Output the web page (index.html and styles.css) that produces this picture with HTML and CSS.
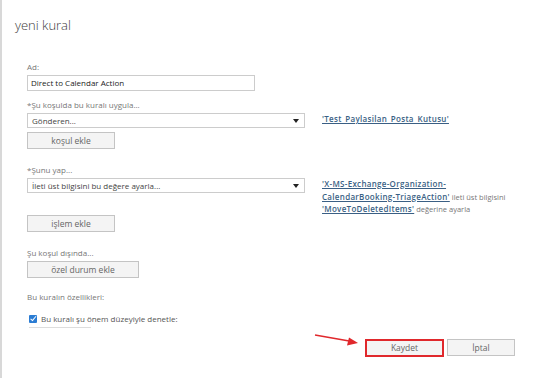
FILE: index.html
```html
<!DOCTYPE html>
<html lang="tr">
<head>
    <meta charset="UTF-8">
    <title>yeni kural</title>
    <link rel="stylesheet" href="styles.css">
</head>
<body>
    <div class="dialog">
        <h1 class="title">yeni kural</h1>

        <div class="form">
            <!-- Ad -->
            <div class="label first">Ad:</div>
            <div class="textbox">Direct to Calendar Action</div>

            <!-- kosul -->
            <div class="label gap-s">*Şu koşulda bu kuralı uygula...</div>
            <div class="row">
                <div class="select">Gönderen...<span class="caret"></span></div>
                <div class="desc"><a href="#">'Test_Paylasilan_Posta_Kutusu'</a></div>
            </div>
            <button class="btn btn-add">koşul ekle</button>

            <!-- eylem -->
            <div class="label gap-l">*Şunu yap...</div>
            <div class="row">
                <div class="select">İleti üst bilgisini bu değere ayarla...<span class="caret"></span></div>
                <div class="desc">
                    <a href="#">'X-MS-Exchange-Organization-<br>CalendarBooking-TriageAction'</a> ileti üst bilgisini
                    <a href="#">'MoveToDeletedItems'</a> değerine ayarla
                </div>
            </div>
            <button class="btn btn-add btn-action">işlem ekle</button>

            <!-- istisna -->
            <div class="label gap-l">Şu koşul dışında...</div>
            <button class="btn btn-except">özel durum ekle</button>

            <div class="label gap-m">Bu kuralın özellikleri:</div>
            <div class="check-row">
                <span class="checkbox"></span>
                <span>Bu kuralı şu önem düzeyiyle denetle:</span>
            </div>
            <div class="cut-field"></div>
        </div>

        <div class="footer">
            <button class="btn btn-save">Kaydet</button>
            <button class="btn btn-cancel">İptal</button>
        </div>

        <!-- annotation arrow -->
        <svg class="arrow" width="50" height="14" viewBox="0 0 50 14">
            <line x1="1" y1="2" x2="38" y2="8.5" stroke="#e0282c" stroke-width="1.5"/>
            <polygon points="44,10 33,12.5 35,4.5" fill="#e0282c"/>
        </svg>
    </div>
</body>
</html>
```

FILE: styles.css
```css
body {
    margin: 0;
    background: #fff;
    font-family: 'Open Sans', 'Noto Sans', sans-serif;
    color: #555;
}

.dialog {
    position: relative;
    width: 536px;
    height: 378px;
    box-sizing: border-box;
    border-left: 2px solid #d8d8d8;
    padding: 17px 0 0 13px;
}

.title {
    margin: 0;
    font-size: 13px;
    font-weight: 300;
    line-height: 16px;
    color: #3a3a3a;
}

.form {
    padding-left: 12px;
}

.label {
    font-size: 8px;
    line-height: 12px;
    color: #777;
    margin-bottom: 2px;
}

.first { margin-top: 28px; }
.gap-s { margin-top: 8px; }
.gap-l { margin-top: 15px; }
.gap-m { margin-top: 13px; }

.textbox {
    width: 223px;
    height: 14px;
    border: 1px solid #ccc;
    padding-left: 3px;
    font-size: 8px;
    line-height: 14px;
    color: #222;
}

.row {
    display: flex;
    align-items: flex-start;
}

.select {
    position: relative;
    width: 272px;
    height: 13px;
    border: 1px solid #ccc;
    padding-left: 4px;
    font-size: 8px;
    line-height: 13px;
    color: #444;
}

.caret {
    position: absolute;
    right: 5px;
    top: 5px;
    border-left: 3px solid transparent;
    border-right: 3px solid transparent;
    border-top: 4px solid #222;
}

.desc {
    margin-left: 17px;
    width: 200px;
    font-size: 7.5px;
    line-height: 11.5px;
    color: #777;
}

.desc a {
    color: #3a5f84;
    font-weight: 600;
    font-size: 8px;
    letter-spacing: 0.3px;
}

.btn {
    display: block;
    font-family: inherit;
    font-size: 8.5px;
    color: #666;
    background: #f4f4f4;
    border: 1px solid #c4c4c4;
    padding: 0;
    height: 17px;
    line-height: 15px;
}

.btn-add {
    width: 88px;
    margin-top: 4px;
}

.btn-action {
    margin-top: -1px;
}

.btn-except {
    width: 112px;
    margin-top: 1px;
}

.check-row {
    display: flex;
    align-items: center;
    margin-top: 10px;
    margin-left: 2px;
    font-size: 8px;
    line-height: 12px;
    color: #555;
}

.checkbox {
    width: 8px;
    height: 8px;
    margin-right: 4px;
    border-radius: 1px;
    background: #2b7cd3;
    position: relative;
}

.checkbox::after {
    content: "";
    position: absolute;
    left: 2.5px;
    top: 0.5px;
    width: 2px;
    height: 4.5px;
    border: solid #fff;
    border-width: 0 1.2px 1.2px 0;
    transform: rotate(40deg);
}

.cut-field {
    width: 62px;
    margin: 2px 0 0 2px;
    border-top: 1px solid #ddd;
}

.footer {
    display: flex;
    align-items: flex-start;
    margin: 11px 0 0 350px;
    gap: 3px;
}

.btn-save {
    width: 79px;
    height: 18px;
    border: 2px solid #e0282c;
    line-height: 14px;
}

.btn-cancel {
    width: 68px;
    height: 17px;
}

.arrow {
    position: absolute;
    left: 312px;
    top: 333px;
}
```
